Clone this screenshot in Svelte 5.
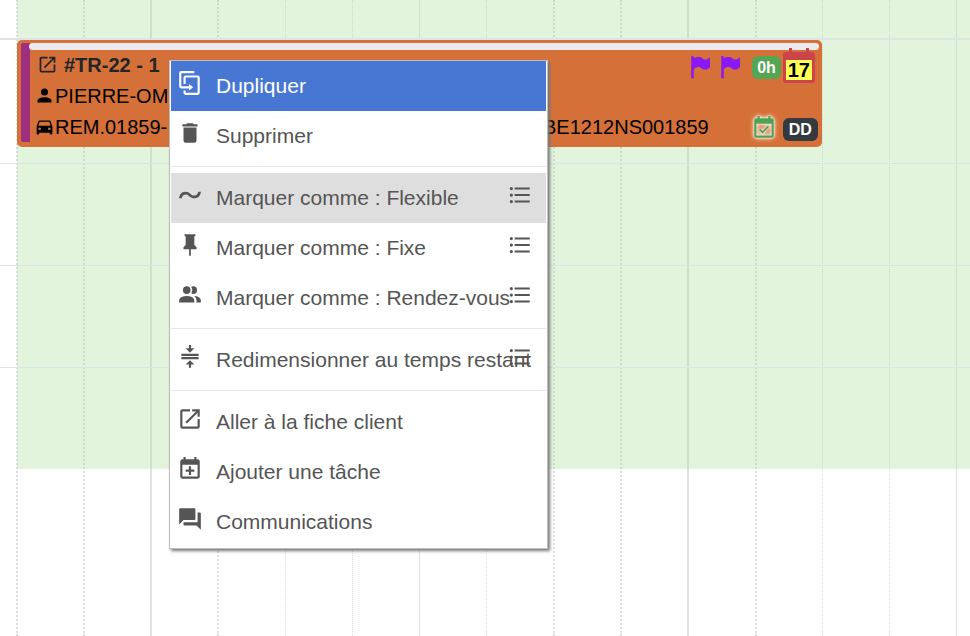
<script lang="ts">
  type MenuItem = { label: string; icon: string; list?: boolean };

  const icons: Record<string, string> = {
    duplicate: 'M11,17H4A2,2 0 0,1 2,15V3A2,2 0 0,1 4,1H16V3H4V15H11V13L15,16L11,19V17M19,21V7H8V13H6V7A2,2 0 0,1 8,5H19A2,2 0 0,1 21,7V21A2,2 0 0,1 19,23H8A2,2 0 0,1 6,21V19H8V21H19Z',
    trash: 'M19,4H15.5L14.5,3H9.5L8.5,4H5V6H19M6,19A2,2 0 0,0 8,21H16A2,2 0 0,0 18,19V7H6V19Z',
    tilde: 'M2,15C2,15 2,9 8,9C12,9 12.5,12.5 15.5,12.5C19.5,12.5 19.5,9 19.5,9H22C22,9 22,15 16,15C12,15 10.5,11.5 8.5,11.5C4.5,11.5 4.5,15 4.5,15H2',
    pin: 'M16,12V4H17V2H7V4H8V12L6,14V16H11.2V22H12.8V16H18V14L16,12Z',
    people: 'M16 17V19H2V17S2 13 9 13 16 17 16 17M12.5 7.5A3.5 3.5 0 1 0 9 11A3.5 3.5 0 0 0 12.5 7.5M15.94 13A5.32 5.32 0 0 1 18 17V19H22V17S22 13.37 15.94 13M15 4A3.39 3.39 0 0 0 13.07 4.59A5 5 0 0 1 13.07 10.41A3.39 3.39 0 0 0 15 11A3.5 3.5 0 0 0 15 4Z',
    collapse: 'M4,12H20V14H4V12M4,9H20V11H4V9M16,4L12,8L8,4H11V1H13V4H16M8,19L12,15L16,19H13V22H11V19H8Z',
    open: 'M14,3V5H17.59L7.76,14.83L9.17,16.24L19,6.41V10H21V3M19,19H5V5H12V3H5C3.89,3 3,3.9 3,5V19A2,2 0 0,0 5,21H19A2,2 0 0,0 21,19V12H19V19Z',
    calendarPlus: 'M19 19V8H5V19H19M16 1H18V3H19C20.11 3 21 3.9 21 5V19C21 20.11 20.11 21 19 21H5C3.89 21 3 20.1 3 19V5C3 3.89 3.89 3 5 3H6V1H8V3H16V1M11 9.5H13V12.5H16V14.5H13V17.5H11V14.5H8V12.5H11V9.5Z',
    forum: 'M17,12V3A1,1 0 0,0 16,2H3A1,1 0 0,0 2,3V17L6,13H16A1,1 0 0,0 17,12M21,6H19V15H6V17A1,1 0 0,0 7,18H18L22,22V7A1,1 0 0,0 21,6Z',
    list: 'M7,5H21V7H7V5M7,13V11H21V13H7M4,4.5A1.5,1.5 0 0,1 5.5,6A1.5,1.5 0 0,1 4,7.5A1.5,1.5 0 0,1 2.5,6A1.5,1.5 0 0,1 4,4.5M4,10.5A1.5,1.5 0 0,1 5.5,12A1.5,1.5 0 0,1 4,13.5A1.5,1.5 0 0,1 2.5,12A1.5,1.5 0 0,1 4,10.5M7,19V17H21V19H7M4,16.5A1.5,1.5 0 0,1 5.5,18A1.5,1.5 0 0,1 4,19.5A1.5,1.5 0 0,1 2.5,18A1.5,1.5 0 0,1 4,16.5Z',
    account: 'M12,4A4,4 0 0,1 16,8A4,4 0 0,1 12,12A4,4 0 0,1 8,8A4,4 0 0,1 12,4M12,14C16.42,14 20,15.79 20,18V20H4V18C4,15.79 7.58,14 12,14Z',
    car: 'M5,11L6.5,6.5H17.5L19,11M17.5,16A1.5,1.5 0 0,1 16,14.5A1.5,1.5 0 0,1 17.5,13A1.5,1.5 0 0,1 19,14.5A1.5,1.5 0 0,1 17.5,16M6.5,16A1.5,1.5 0 0,1 5,14.5A1.5,1.5 0 0,1 6.5,13A1.5,1.5 0 0,1 8,14.5A1.5,1.5 0 0,1 6.5,16M18.92,6C18.72,5.42 18.16,5 17.5,5H6.5C5.84,5 5.28,5.42 5.08,6L3,12V20A1,1 0 0,0 4,21H5A1,1 0 0,0 6,20V19H18V20A1,1 0 0,0 19,21H20A1,1 0 0,0 21,20V12L18.92,6Z',
    flag: 'M6,3A1,1 0 0,1 7,4V4.88C8.06,4.44 9.5,4 11,4C14,4 14,6 16,6C19,6 20,4 20,4V12C20,12 19,14 16,14C13,14 13,12 11,12C8,12 7,14 7,14V21H5V4A1,1 0 0,1 6,3Z',
    calendarCheck: 'M16.53,11.06L15.47,10L10.59,14.88L8.47,12.76L7.41,13.82L10.59,17L16.53,11.06M19,19H5V8H19M16,1V3H8V1H6V3H5C3.89,3 3,3.9 3,5V19A2,2 0 0,0 5,21H19A2,2 0 0,0 21,19V5C21,3.89 20.1,3 19,3H18V1H16Z'
  };

  const groups: MenuItem[][] = [
    [
      { label: 'Dupliquer', icon: 'duplicate' },
      { label: 'Supprimer', icon: 'trash' }
    ],
    [
      { label: 'Marquer comme : Flexible', icon: 'tilde', list: true },
      { label: 'Marquer comme : Fixe', icon: 'pin', list: true },
      { label: 'Marquer comme : Rendez-vous', icon: 'people', list: true }
    ],
    [{ label: 'Redimensionner au temps restant', icon: 'collapse', list: true }],
    [
      { label: 'Aller à la fiche client', icon: 'open' },
      { label: 'Ajouter une tâche', icon: 'calendarPlus' },
      { label: 'Communications', icon: 'forum' }
    ]
  ];

  // one entry per quarter of the timeline, "wide" lines are 2px
  const slots = [
    'dotted wide', 'dotted wide', 'wide', 'dotted wide', 'dotted', 'dotted', '',
    'dotted', 'dotted wide', 'dotted wide', 'wide', 'dotted wide', 'dotted', 'dotted last'
  ];

  let hovered = $state('Dupliquer');
  const current = 'Marquer comme : Flexible';
</script>

{#snippet icon(name: string, cls = '')}
  <svg class="icon {cls}" viewBox="0 0 24 24" aria-hidden="true"><path d={icons[name]} /></svg>
{/snippet}

<main class="planner">
  <div class="slots">
    {#each slots as slot}
      <div class="slot {slot}"></div>
    {/each}
  </div>

  <div class="rows">
    <div class="row head"><div class="shift"></div></div>
    <div class="row tall">
      <div class="shift track">
        <article class="event">
          <div class="stripe"></div>
          <div class="body">
            <div class="progress"></div>
            <div class="line">
              <a class="ref" href="#tr-22">{@render icon('open', 'lead')}#TR-22 - 1</a>
              <div class="badges">
                {@render icon('flag', 'flag')}
                {@render icon('flag', 'flag')}
                <span class="badge green">0h</span>
                <span class="day">17</span>
              </div>
            </div>
            <div class="line">{@render icon('account', 'lead')}<span>PIERRE-OM</span></div>
            <div class="line">
              {@render icon('car', 'lead')}<span>REM.01859-</span>
              <span class="serial">BE1212NS001859</span>
              <div class="badges">
                {@render icon('calendarCheck', 'check')}
                <span class="badge dark">DD</span>
              </div>
            </div>
          </div>
        </article>
      </div>
    </div>
    <div class="row"><div class="shift"></div></div>
    <div class="row"><div class="shift"></div></div>
    <div class="row end"><div class="shift"></div></div>
  </div>

  <div class="menu" role="menu">
    {#each groups as group, i}
      {#if i > 0}<hr />{/if}
      {#each group as item}
        <button
          class="item"
          class:active={item.label === hovered}
          class:current={item.label === current}
          role="menuitem"
          onmouseenter={() => (hovered = item.label)}
        >
          {@render icon(item.icon)}
          <span>{item.label}</span>
          {#if item.list}{@render icon('list', 'list')}{/if}
        </button>
      {/each}
    {/each}
  </div>
</main>

<style>
  :global(body) {
    margin: 0;
    background: #fff;
  }

  .planner {
    position: relative;
    min-height: 100vh;
    overflow: hidden;
    font-family: "Liberation Sans", Arial, sans-serif;
    font-size: 20px;
    color: #000;
  }

  .icon {
    display: block;
    flex: none;
    fill: currentColor;
  }

  .slots {
    position: absolute;
    inset: 0;
    display: grid;
    grid-template-columns: repeat(14, 1fr);
    padding: 0 14px 0 16px;
  }

  .slot {
    border-left: 1px solid #dee2e6;
  }

  .slot.wide {
    border-left-width: 2px;
  }

  .slot.dotted {
    border-left-style: dotted;
    border-left-color: #dcdce4;
  }

  .slot.last {
    margin-right: -1px;
    border-right: 1px solid #dee2e6;
  }

  .rows {
    position: relative;
  }

  .row {
    display: grid;
    height: 101px;
    padding-left: 17px;
    border-bottom: 1px solid #dde3e6;
  }

  .row.head {
    height: 38px;
    border-bottom-width: 2px;
  }

  .row.tall {
    height: 123px;
  }

  .row.end {
    border-bottom: none;
  }

  .shift {
    background: rgba(170, 224, 152, 0.34);
  }

  .head .shift,
  .end .shift {
    border-bottom-left-radius: 3px;
  }

  .track {
    display: grid;
    grid-template-columns: repeat(14, 1fr);
    align-items: start;
    padding-right: 14px;
  }

  .event {
    grid-column: span 12;
    display: flex;
    box-sizing: border-box;
    height: 107px;
    padding: 3px 3px 5px 4px;
    border-radius: 5px;
    background: #d57138;
  }

  .stripe {
    width: 9px;
    border-radius: 2px 0 0 2px;
    background: #9e2f80;
  }

  .body {
    flex: 1;
    min-width: 0;
  }

  .progress {
    height: 7px;
    margin-left: -1px;
    border-radius: 4px;
    background: #ebebef;
  }

  .line {
    display: flex;
    align-items: center;
    height: 31px;
    padding-left: 4px;
    white-space: nowrap;
  }

  .lead {
    width: 21px;
    height: 21px;
    margin-bottom: 2px;
  }

  .ref {
    display: flex;
    align-items: center;
    gap: 6px;
    padding-left: 3px;
    color: #212529;
    font-weight: bold;
    text-decoration: none;
  }

  .badges {
    display: flex;
    align-items: center;
    margin-left: auto;
  }

  .serial {
    margin-left: auto;
  }

  .serial + .badges {
    gap: 6px;
    margin-left: 42px;
    padding-right: 1px;
  }

  .flag {
    width: 30px;
    height: 30px;
    margin-top: 2px;
    color: #8a17f5;
  }

  .badge {
    margin-top: 4px;
    padding: 0 5px;
    border-radius: 6px;
    color: #fff;
    font-size: 16px;
    font-weight: bold;
    line-height: 23px;
  }

  .green {
    margin-left: 7px;
    background: #54a554;
  }

  .dark {
    padding: 0 6px;
    background: #343a40;
  }

  .day {
    position: relative;
    margin: 4px 4px 0 2px;
    width: 26px;
    border: 3px solid #cb444a;
    border-top-width: 8px;
    border-radius: 3px;
    background: #ffff54;
    line-height: 20px;
    text-align: center;
    font-weight: bold;
  }

  /* calendar rings */
  .day::before {
    content: "";
    position: absolute;
    top: -12px;
    left: 3px;
    width: 14px;
    height: 4px;
    border: solid #cb444a;
    border-width: 0 3px;
  }

  .check {
    width: 26px;
    height: 26px;
    color: #4ea450;
    filter: drop-shadow(0 0 1px #fff) drop-shadow(0 0 2px #fff);
  }

  .menu {
    position: absolute;
    top: 60px;
    left: 169px;
    box-sizing: border-box;
    width: 379px;
    padding: 0 1px 1px;
    border: 1px solid #bebebe;
    background: #fff;
    box-shadow: 2px 2px 3px #777;
  }

  .menu hr {
    height: 1px;
    margin: 5px 0 6px;
    border: none;
    background: #e6e6e6;
  }

  .item {
    position: relative;
    display: flex;
    align-items: center;
    gap: 13px;
    width: 100%;
    height: 50px;
    padding: 0 6px;
    border: none;
    background: none;
    color: #555;
    font: inherit;
    font-size: 21px;
    white-space: nowrap;
    cursor: pointer;
  }

  .item :global(.icon) {
    width: 26px;
    height: 26px;
    margin-bottom: 6px;
  }

  .item .list {
    position: absolute;
    top: 9px;
    right: 13px;
  }

  .item.current {
    background: #dedede;
  }

  .item.active {
    background: #4777d2;
    color: #fff;
  }
</style>
